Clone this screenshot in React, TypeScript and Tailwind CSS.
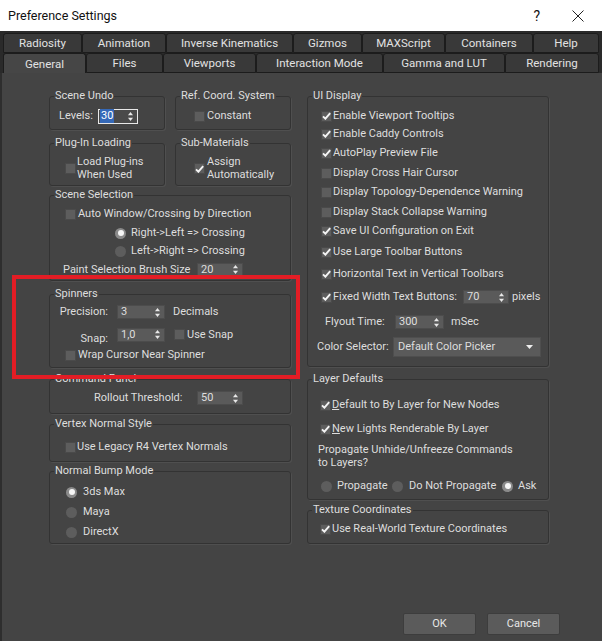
import React from "react";

const Check = ({ on }: { on?: boolean }) => (
  <span className="flex h-[11px] w-[11px] shrink-0 items-center justify-center border border-[#4a4a4a] bg-[#5d5d5d]">
    {on && (
      <svg width="9" height="8" viewBox="0 0 9 8">
        <path d="M1 4.3 L3.4 6.7 L8.2 1.2" fill="none" stroke="#f4f4f4" strokeWidth="1.9" />
      </svg>
    )}
  </span>
);

const Radio = ({ on }: { on?: boolean }) => (
  <span
    className={
      on
        ? "flex h-[11px] w-[11px] shrink-0 items-center justify-center rounded-full bg-[#8a8a8a]"
        : "flex h-[11px] w-[11px] shrink-0 items-center justify-center rounded-full bg-[#5d5d5d]"
    }
  >
    {on && <span className="h-[6px] w-[6px] rounded-full bg-[#f6f6f6]" />}
  </span>
);

const Arrows = () => (
  <svg width="5" height="9" viewBox="0 0 5 9" className="shrink-0">
    <path d="M2.5 0 L5 3.2 L0 3.2 Z" fill="#e8e8e8" />
    <path d="M0 5.8 L5 5.8 L2.5 9 Z" fill="#e8e8e8" />
  </svg>
);

const Spin = ({ v, className }: { v: string; className: string }) => (
  <span
    className={
      "flex h-[14px] shrink-0 items-center justify-between border border-[#4c4c4c] bg-[#5a5a5a] pl-[3px] pr-[4px] " +
      className
    }
  >
    <span>{v}</span>
    <Arrows />
  </span>
);

const Group = ({
  title,
  className,
  children,
}: {
  title: string;
  className: string;
  children?: React.ReactNode;
}) => (
  <fieldset
    className={
      "rounded-[3px] border border-[#333333] shadow-[1px_1px_0_#4f4f4f] " + className
    }
  >
    <legend className="ml-[4px] h-[14px] px-[1px] leading-[14px]">{title}</legend>
    {children}
  </fieldset>
);

const Tab = ({
  label,
  className,
}: {
  label: string;
  className: string;
}) => (
  <div
    className={
      "flex h-[20px] items-center justify-center rounded-t-[3px] border border-[#1c1c1c] " +
      className
    }
  >
    {label}
  </div>
);

export default function App() {
  return (
    <div className="w-[602px] h-[641px] overflow-hidden font-['Roboto',sans-serif] text-[11px] leading-[14px] text-[#dedede]">
      {/* Title bar */}
      <div className="flex h-[31px] items-center bg-white pl-[8px] pt-[1px] text-[12.5px] text-[#111]">
        <span>Preference Settings</span>
        <span className="ml-auto mr-[32px] text-[14px]">?</span>
        <svg width="12" height="12" viewBox="0 0 12 12" className="mr-[18px]">
          <path d="M0.5 0.5 L11.5 11.5 M11.5 0.5 L0.5 11.5" stroke="#222" strokeWidth="1" />
        </svg>
      </div>

      {/* Tabs */}
      <div className="bg-[#2a2a2a] pl-[3px] pt-[2px] text-[11.5px] text-[#e2e2e2]">
        <div className="flex">
          <Tab label="Radiosity" className="w-[79px] bg-[#393939]" />
          <Tab label="Animation" className="w-[84px] bg-[#393939]" />
          <Tab label="Inverse Kinematics" className="w-[127px] bg-[#393939]" />
          <Tab label="Gizmos" className="w-[69px] bg-[#393939]" />
          <Tab label="MAXScript" className="w-[83px] bg-[#393939]" />
          <Tab label="Containers" className="w-[88px] bg-[#393939]" />
          <Tab label="Help" className="w-[66px] bg-[#393939]" />
        </div>
        <div className="flex">
          <Tab label="General" className="w-[83px] border-b-0 bg-[#464646]" />
          <Tab label="Files" className="w-[77px] bg-[#393939]" />
          <Tab label="Viewports" className="w-[93px] bg-[#393939]" />
          <Tab label="Interaction Mode" className="w-[127px] bg-[#393939]" />
          <Tab label="Gamma and LUT" className="w-[122px] bg-[#393939]" />
          <Tab label="Rendering" className="w-[94px] bg-[#393939]" />
        </div>
      </div>

      {/* Body */}
      <div className="relative h-[568px] bg-[#444444] shadow-[inset_2px_0_0_#2e2e2e]">
        <div className="flex pl-[49px] pt-[16px]">
          {/* Left column */}
          <div className="flex w-[242px] flex-col">
            <div className="flex gap-[10px]">
              <Group title="Scene Undo" className="h-[41px] w-[116px]">
                <div className="pt-[5px]">
                  <div className="flex h-[16px] items-center pl-[9px]">
                    <span className="w-[39px]">Levels:</span>
                    <span className="flex h-[15px] w-[40px] items-center justify-between border border-[#e8e8e8] bg-[#4a4a4a] pl-[1px] pr-[4px]">
                      <span className="bg-[#3569b8] px-[1px] text-white">30</span>
                      <Arrows />
                    </span>
                  </div>
                </div>
              </Group>
              <Group title="Ref. Coord. System" className="h-[41px] w-[116px]">
                <div className="pt-[5px]">
                  <div className="flex h-[16px] items-center pl-[18px]">
                    <Check />
                    <span className="ml-[2px]">Constant</span>
                  </div>
                </div>
              </Group>
            </div>

            <div className="mt-[6px] flex gap-[10px]">
              <Group title="Plug-In Loading" className="h-[50px] w-[116px]">
                <div className="flex items-center pl-[15px] pt-[6px]">
                  <Check />
                  <span className="ml-[1px] leading-[12.5px]">
                    Load Plug-ins
                    <br />
                    When Used
                  </span>
                </div>
              </Group>
              <Group title="Sub-Materials" className="h-[50px] w-[116px]">
                <div className="flex items-center pl-[18px] pt-[6px]">
                  <Check on />
                  <span className="ml-[2px] leading-[12.5px]">
                    Assign
                    <br />
                    Automatically
                  </span>
                </div>
              </Group>
            </div>

            <Group title="Scene Selection" className="mt-[2px] h-[93px] w-[242px]">
              <div className="pt-[4px]">
                <div className="flex h-[16px] items-center pl-[15px]">
                  <Check />
                  <span className="ml-[2px]">Auto Window/Crossing by Direction</span>
                </div>
                <div className="mt-[2px] flex h-[18px] items-center pl-[65px]">
                  <Radio on />
                  <span className="ml-[5px]">Right-&gt;Left =&gt; Crossing</span>
                </div>
                <div className="flex h-[18px] items-center pl-[65px]">
                  <Radio />
                  <span className="ml-[5px]">Left-&gt;Right =&gt; Crossing</span>
                </div>
                <div className="flex h-[19px] items-center pl-[13px]">
                  <span className="w-[134px]">Paint Selection Brush Size</span>
                  <Spin v="20" className="w-[46px]" />
                </div>
              </div>
            </Group>

            <Group title="Spinners" className="mt-[6px] h-[81px] w-[242px]">
              <div className="pt-[3px]">
                <div className="flex h-[16px] items-center">
                  <span className="w-[58px] text-right">Precision:</span>
                  <Spin v="3" className="ml-[9px] w-[48px]" />
                  <span className="ml-[8px]">Decimals</span>
                </div>
                <div className="mt-[7px] flex h-[15px] items-center">
                  <span className="mt-[9px] w-[58px] text-right">Snap:</span>
                  <Spin v="1,0" className="ml-[9px] w-[48px]" />
                  <span className="ml-[9px]">
                    <Check />
                  </span>
                  <span className="ml-[2px]">Use Snap</span>
                </div>
                <div className="mt-[5px] flex h-[16px] items-center pl-[15px]">
                  <Check />
                  <span className="ml-[2px]">Wrap Cursor Near Spinner</span>
                </div>
              </div>
            </Group>

            <Group title="Command Panel" className="mt-[4px] h-[42px] w-[242px]">
              <div className="pt-[4px]">
                <div className="flex h-[16px] items-center pl-[44px]">
                  <span className="w-[103px]">Rollout Threshold:</span>
                  <Spin v="50" className="w-[46px]" />
                </div>
              </div>
            </Group>

            <Group title="Vertex Normal Style" className="mt-[3px] h-[45px] w-[242px]">
              <div className="pt-[8px]">
                <div className="flex h-[16px] items-center pl-[15px]">
                  <Check />
                  <span className="ml-[1px]">Use Legacy R4 Vertex Normals</span>
                </div>
              </div>
            </Group>

            <Group title="Normal Bump Mode" className="mt-[2px] h-[80px] w-[242px]">
              <div className="pt-[4px]">
                <div className="flex h-[20px] items-center pl-[16px]">
                  <Radio on />
                  <span className="ml-[6px]">3ds Max</span>
                </div>
                <div className="flex h-[20px] items-center pl-[16px]">
                  <Radio />
                  <span className="ml-[6px]">Maya</span>
                </div>
                <div className="flex h-[20px] items-center pl-[16px]">
                  <Radio />
                  <span className="ml-[6px]">DirectX</span>
                </div>
              </div>
            </Group>
          </div>

          {/* Right column */}
          <div className="ml-[16px] flex w-[242px] flex-col">
            <Group title="UI Display" className="h-[278px] w-[242px]">
              <div className="pt-[4px]">
                <div className="flex h-[18px] items-center pl-[13px]">
                  <Check on />
                  <span className="ml-[1px]">Enable Viewport Tooltips</span>
                </div>
                <div className="flex h-[18px] items-center pl-[13px]">
                  <Check on />
                  <span className="ml-[1px]">Enable Caddy Controls</span>
                </div>
                <div className="flex h-[20px] items-center pl-[13px]">
                  <Check on />
                  <span className="ml-[1px]">AutoPlay Preview File</span>
                </div>
                <div className="flex h-[20px] items-center pl-[13px]">
                  <Check />
                  <span className="ml-[1px]">Display Cross Hair Cursor</span>
                </div>
                <div className="flex h-[18px] items-center pl-[13px]">
                  <Check />
                  <span className="ml-[1px]">Display Topology-Dependence Warning</span>
                </div>
                <div className="flex h-[22px] items-center pl-[13px]">
                  <Check />
                  <span className="ml-[1px]">Display Stack Collapse Warning</span>
                </div>
                <div className="flex h-[16px] items-center pl-[13px]">
                  <Check on />
                  <span className="ml-[1px]">Save UI Configuration on Exit</span>
                </div>
                <div className="flex h-[26px] items-center pl-[13px]">
                  <Check on />
                  <span className="ml-[1px]">Use Large Toolbar Buttons</span>
                </div>
                <div className="flex h-[18px] items-center pl-[13px]">
                  <Check on />
                  <span className="ml-[1px]">Horizontal Text in Vertical Toolbars</span>
                </div>
                <div className="flex h-[28px] items-center pl-[13px]">
                  <Check on />
                  <span className="ml-[1px] w-[130px]">Fixed Width Text Buttons:</span>
                  <Spin v="70" className="w-[46px]" />
                  <span className="ml-[3px]">pixels</span>
                </div>
                <div className="flex h-[22px] items-center pl-[17px]">
                  <span className="w-[70px]">Flyout Time:</span>
                  <Spin v="300" className="w-[49px]" />
                  <span className="ml-[7px]">mSec</span>
                </div>
                <div className="flex h-[28px] items-center pl-[9px]">
                  <span className="w-[76px]">Color Selector:</span>
                  <span className="flex h-[20px] w-[148px] items-center justify-between border border-[#4e4e4e] bg-[#5a5a5a] pl-[4px] pr-[7px]">
                    <span>Default Color Picker</span>
                    <svg width="7" height="4" viewBox="0 0 7 4">
                      <path d="M0 0 L7 0 L3.5 4 Z" fill="#eeeeee" />
                    </svg>
                  </span>
                </div>
              </div>
            </Group>

            <Group title="Layer Defaults" className="mt-[5px] h-[128px] w-[242px]">
              <div className="pt-[9px]">
                <div className="flex h-[20px] items-center pl-[12px]">
                  <Check on />
                  <span className="ml-[1px]">
                    <u>D</u>efault to By Layer for New Nodes
                  </span>
                </div>
                <div className="flex h-[28px] items-center pl-[12px]">
                  <Check on />
                  <span className="ml-[1px]">
                    <u>N</u>ew Lights Renderable By Layer
                  </span>
                </div>
                <div className="pl-[10px] leading-[13px]">
                  Propagate Unhide/Unfreeze Commands
                  <br />
                  to Layers?
                </div>
                <div className="mt-[8px] flex h-[18px] items-center pl-[13px]">
                  <span className="flex w-[71px] items-center">
                    <Radio />
                    <span className="ml-[5px]">Propagate</span>
                  </span>
                  <span className="flex w-[110px] items-center">
                    <Radio />
                    <span className="ml-[6px]">Do Not Propagate</span>
                  </span>
                  <span className="flex items-center">
                    <Radio on />
                    <span className="ml-[5px]">Ask</span>
                  </span>
                </div>
              </div>
            </Group>

            <Group title="Texture Coordinates" className="mt-[3px] h-[41px] w-[242px]">
              <div className="pt-[4px]">
                <div className="flex h-[16px] items-center pl-[12px]">
                  <Check on />
                  <span className="ml-[1px]">Use Real-World Texture Coordinates</span>
                </div>
              </div>
            </Group>
          </div>
        </div>

        {/* Buttons */}
        <div className="mt-[69px] flex justify-end pr-[42px]">
          <button className="h-[22px] w-[73px] rounded-[2px] border border-[#3d3d3d] bg-[#5b5b5b] text-[#e8e8e8]">
            OK
          </button>
          <button className="ml-[11px] h-[22px] w-[73px] rounded-[2px] border border-[#3d3d3d] bg-[#5b5b5b] text-[#e8e8e8]">
            Cancel
          </button>
        </div>

        {/* Red annotation */}
        <div className="pointer-events-none absolute left-[12px] top-[202px] h-[104px] w-[288px] border-[4px] border-[#e31d25]" />
      </div>
    </div>
  );
}
